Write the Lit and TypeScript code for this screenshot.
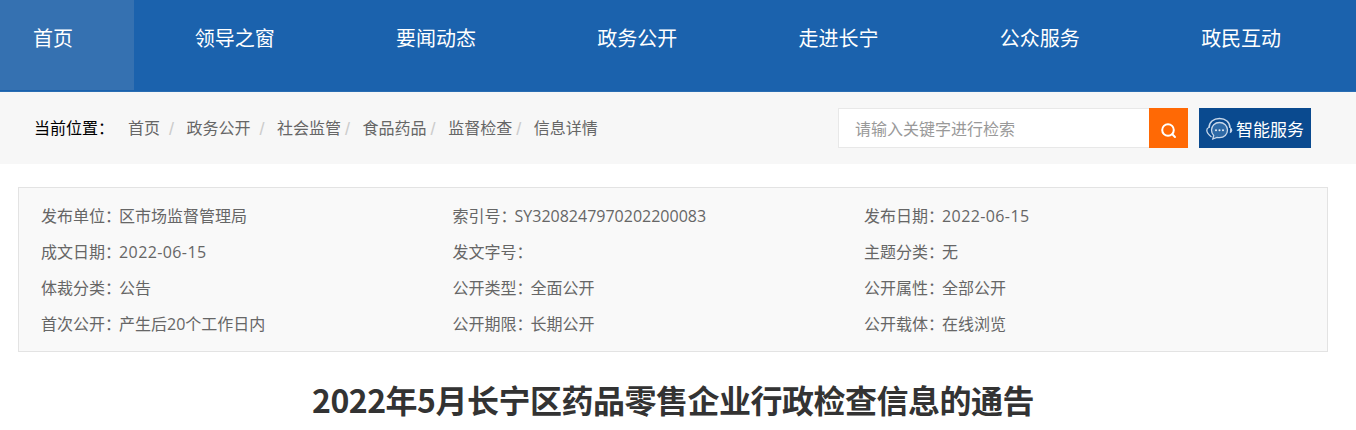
import { html, css, LitElement, svg } from 'lit';
import { customElement } from 'lit/decorators.js';

const NAV = ['首页', '领导之窗', '要闻动态', '政务公开', '走进长宁', '公众服务', '政民互动'];
const CRUMBS = ['首页', '政务公开', '社会监管', '食品药品', '监督检查', '信息详情'];
const META: Array<Array<[string, string]>> = [
  [['发布单位', '区市场监督管理局'], ['成文日期', '2022-06-15'], ['体裁分类', '公告'], ['首次公开', '产生后20个工作日内']],
  [['索引号', 'SY3208247970202200083'], ['发文字号', ''], ['公开类型', '全面公开'], ['公开期限', '长期公开']],
  [['发布日期', '2022-06-15'], ['主题分类', '无'], ['公开属性', '全部公开'], ['公开载体', '在线浏览']],
];

const headset = svg`<svg class="headset" width="27" height="24" viewBox="0 0 27 24" fill="none" stroke="#c9d8ea">
  <path d="M3 11 C3 5 7.500 1.500 13.500 1.500 C19.500 1.500 24 5 24 11" stroke-width="1.500"/>
  <path d="M13.500 5.500 C8.800 5.500 5.500 8.800 5.500 13 C5.500 15.300 6.300 17.100 7.700 18.500 L6.800 22 L11 20.400 C11.800 20.600 12.600 20.700 13.500 20.700 C18.200 20.700 21.500 17.300 21.500 13 C21.500 8.800 18.200 5.500 13.500 5.500 Z" fill="#2f6aa6" stroke-width="1.300"/>
  <path d="M2.800 10.500 C1.300 11 .8 12 .8 13.300 C.8 15.500 2.200 17.500 5.500 20" stroke-width="1.300"/>
  <path d="M24.200 10.500 C25.700 11 26.200 12 26.200 13.300 C26.200 14.800 25.300 16 23.800 16.300 Z" fill="#c9d8ea" stroke="none"/>
  <circle cx="10" cy="13.200" r="1" fill="#e6eef7" stroke="none"/>
  <circle cx="13.500" cy="13.200" r="1" fill="#e6eef7" stroke="none"/>
  <circle cx="17" cy="13.200" r="1" fill="#e6eef7" stroke="none"/>
</svg>`;

@customElement('app-root')
export class AppRoot extends LitElement {
  static override styles = css`
    :host {
      display: block;
      height: 430px;
      overflow: hidden;
      background: #fff;
      font-family: "Liberation Sans", "Noto Sans CJK SC", sans-serif;
    }

    .nav {
      display: flex;
      height: 91px;
      background: #1b62ad;
      border-bottom: 1px solid #2a6db3;
    }

    .nav a {
      width: 201.300px;
      padding-top: 25px;
      box-sizing: border-box;
      text-align: center;
      font-size: 20px;
      line-height: 28px;
      color: #fff;
    }

    .nav a:first-child {
      width: 134px;
      padding-left: 33px;
      text-align: left;
      background: #3571b1;
      height: 90px;
    }

    .bar {
      display: flex;
      align-items: flex-start;
      height: 72px;
      background: #f7f7f7;
      padding: 16px 45px 0 34px;
      box-sizing: border-box;
    }

    .here {
      width: 94px;
      font-size: 16px;
      line-height: 42px;
      color: #000;
    }

    .crumbs {
      display: flex;
      flex: 1;
      font-size: 16px;
      line-height: 42px;
      color: #666;
    }

    .crumbs i {
      font-style: normal;
      font-size: 18px;
      color: #ccc;
      padding: 0 12.500px 0 4px;
    }

    .crumbs i.wide {
      padding: 0 12.500px 0 9px;
    }

    .search {
      display: flex;
      width: 350px;
      height: 40px;
    }

    .search .input {
      flex: 1;
      box-sizing: border-box;
      background: #fff;
      border: 1px solid #e8e8e8;
      border-right: none;
      padding-left: 16px;
      font-size: 16px;
      line-height: 41px;
      color: #999;
    }

    .search .btn {
      display: flex;
      align-items: center;
      justify-content: center;
      width: 39px;
      background: #ff6905;
    }

    .search .btn svg {
      margin-top: 6px;
    }

    .service {
      display: flex;
      align-items: center;
      gap: 3px;
      width: 112px;
      height: 40px;
      margin-left: 11px;
      padding-left: 7px;
      box-sizing: border-box;
      background: #0a4a8f;
      color: #fff;
      font-size: 17px;
    }

    .headset {
      flex: none;
      margin-top: 2px;
    }

    .meta {
      display: flex;
      height: 165px;
      box-sizing: border-box;
      margin: 23px 28px 0 18px;
      padding: 10px 0 0 22px;
      background: #f9f9f9;
      border: 1px solid #e3e3e3;
    }

    .col {
      width: 411.500px;
    }

    .row {
      font-family: "Open Sans", "Noto Sans CJK SC", sans-serif;
      font-size: 16px;
      line-height: 36px;
      color: #666;
      white-space: pre;
    }

    .row .key {
      margin-right: -2px;
    }

    .row .date {
      letter-spacing: 0.4px;
    }

    h1 {
      margin: 20px 28px 0 18px;
      text-align: center;
      font-family: "Noto Sans CJK SC", sans-serif;
      font-size: 32px;
      line-height: 54px;
      font-weight: 700;
      letter-spacing: -0.5px;
      color: #333;
    }
  `;

  override render() {
    return html`
      <nav class="nav">${NAV.map(n => html`<a>${n}</a>`)}</nav>
      <div class="bar">
        <div class="here">当前位置：</div>
        <div class="crumbs">
          ${CRUMBS.map((c, i) => html`<span>${c}</span>${i < CRUMBS.length - 1 ? html`<i class=${i < 2 ? 'wide' : ''}>/</i>` : ''}`)}
        </div>
        <div class="search">
          <div class="input">请输入关键字进行检索</div>
          <div class="btn">
            <svg width="18" height="18" viewBox="0 0 18 18" fill="none" stroke="#fff" stroke-width="2" stroke-linecap="round">
              <circle cx="8" cy="8" r="5.800"/>
              <path d="M12.300 12.300 L15 15"/>
            </svg>
          </div>
        </div>
        <div class="service">${headset}<span>智能服务</span></div>
      </div>
      <div class="meta">
        ${META.map(col => html`<div class="col">
          ${col.map(([k, v]) => html`<div class="row"><span class="key">${k}：</span><span class=${/^\d{4}-/.test(v) ? 'date' : ''}>${v}</span></div>`)}
        </div>`)}
      </div>
      <h1>2022年5月长宁区药品零售企业行政检查信息的通告</h1>
    `;
  }
}
